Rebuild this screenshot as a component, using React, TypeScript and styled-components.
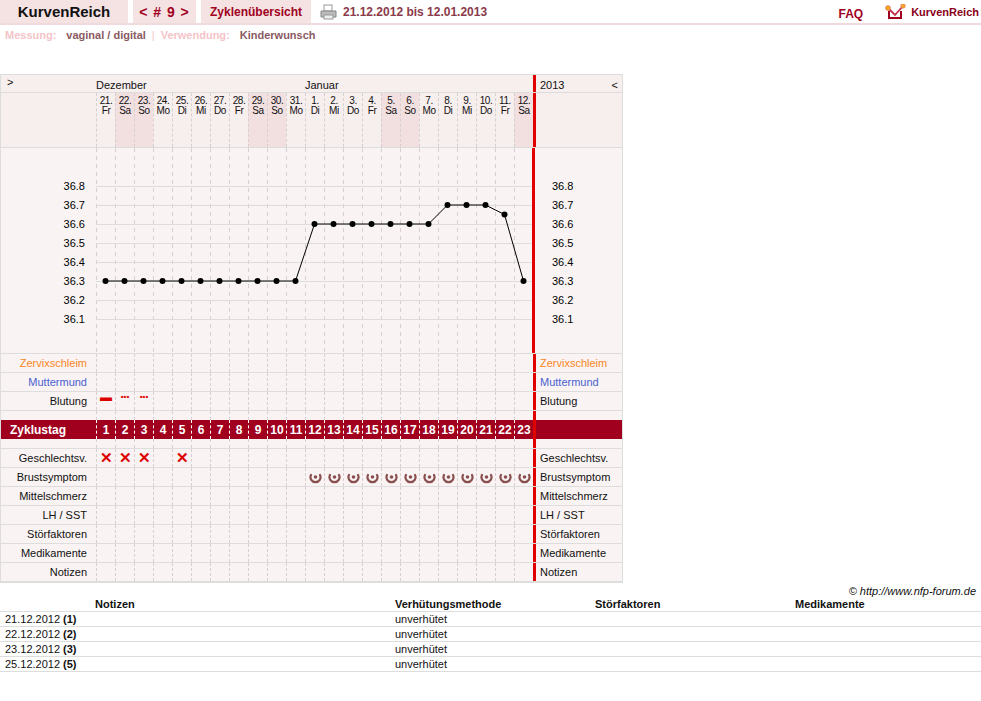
import React from "react";
import styled, { createGlobalStyle } from "styled-components";

const Global = createGlobalStyle`
  body { margin: 0; font-family: "Liberation Sans", Arial, sans-serif; font-size: 11px; color: #111; background: #fff; }
`;

const COL = 19;
const N = 23;
const days = ["21.","22.","23.","24.","25.","26.","27.","28.","29.","30.","31.","1.","2.","3.","4.","5.","6.","7.","8.","9.","10.","11.","12."];
const wds = ["Fr","Sa","So","Mo","Di","Mi","Do","Fr","Sa","So","Mo","Di","Mi","Do","Fr","Sa","So","Mo","Di","Mi","Do","Fr","Sa"];
const temps = [36.3,36.3,36.3,36.3,36.3,36.3,36.3,36.3,36.3,36.3,36.3,36.6,36.6,36.6,36.6,36.6,36.6,36.6,36.7,36.7,36.7,36.65,36.3];
const levels = [36.8,36.7,36.6,36.5,36.4,36.3,36.2,36.1];
const ty = (t: number) => 38 + (36.8 - t) * 190;

const TopBar = styled.div`
  display: flex; align-items: stretch; height: 23px; border-bottom: 2px solid #f1dadc;
`;
const Tab = styled.div<{ $w: number; $plain?: boolean }>`
  width: ${p => p.$w}px; margin-right: 5px; background: ${p => p.$plain ? "transparent" : "#f5e2e3"};
  display: flex; align-items: center; justify-content: center; font-weight: bold;
`;
const Brand = styled.span` font-size: 15px; color: #111; `;
const Nav = styled.span` font-size: 14px; color: #a0001e; letter-spacing: 1px; `;
const TabLink = styled.span` font-size: 12px; color: #a0001e; `;
const DateRange = styled.div`
  display: flex; align-items: center; gap: 6px; padding-left: 4px; font-weight: bold; font-size: 12px; color: #8b3a4a; flex: 1;
`;
const Faq = styled.div` font-weight: bold; font-size: 12px; color: #a0001e; display: flex; align-items: center; margin-right: 22px; padding-top: 4px; `;
const Logo = styled.div` display: flex; align-items: center; gap: 4px; font-weight: bold; font-size: 11px; color: #8a0018; margin-right: 2px; `;
const SubBar = styled.div` padding: 4px 5px; font-size: 11px; font-weight: bold; `;
const Muted = styled.span` color: #f4c4c8; margin-right: 10px; `;
const Val = styled.span` color: #8a5a62; `;
const Sep = styled.span` color: #f4c4c8; margin: 0 6px; font-weight: normal; `;

const Chart = styled.div` margin-top: 29px; width: 621px; border: 1px solid #ddd; background: #f9f3f3; `;
const Row = styled.div<{ $h: number; $bg?: string; $line?: boolean }>`
  display: flex; height: ${p => p.$h}px; background: ${p => p.$bg || "transparent"};
  border-bottom: ${p => p.$line === false ? "none" : "1px solid #ddd"}; box-sizing: border-box;
`;
const Label = styled.div<{ $color?: string; $align?: string; $white?: boolean }>`
  width: 95px; flex: none; box-sizing: border-box; padding: 0 9px 0 4px; display: flex; align-items: center;
  justify-content: ${p => p.$align || "flex-end"}; color: ${p => p.$color || "#111"};
  ${p => p.$white ? "color:#fff;font-weight:bold;font-size:12px;padding-left:9px;" : ""}
`;
const Cells = styled.div` display: flex; width: ${N * COL}px; flex: none; `;
const Cell = styled.div<{ $shade?: boolean; $white?: boolean; $top?: boolean }>`
  width: ${COL}px; flex: none; box-sizing: border-box; border-left: 1px dashed ${p => p.$white ? "#fff" : "#d6d0d0"};
  background: ${p => p.$shade ? "#f2dfe0" : "transparent"};
  display: flex; flex-direction: column; align-items: center; justify-content: ${p => p.$top ? "flex-start" : "center"};
  ${p => p.$white ? "color:#fff;font-weight:bold;font-size:12px;" : ""}
`;
const DayTxt = styled.div` font-size: 10px; line-height: 10px; letter-spacing: -0.4px; padding-top: 3px; text-align: center; `;
const Right = styled.div<{ $color?: string }>`
  flex: 1; border-left: 3px solid #e00000; box-sizing: border-box; padding-left: 4px; display: flex; align-items: center;
  color: ${p => p.$color || "#111"};
`;
const MonthRow = styled.div` display: flex; height: 17px; border-bottom: 1px solid #ddd; background: #f7eeee; `;
const MonthLabel = styled.div<{ $w: number }>` width: ${p => p.$w}px; flex: none; padding-top: 4px; `;
const Arrow = styled.div` width: 95px; flex: none; padding: 1px 0 0 6px; box-sizing: border-box; `;
const YearCell = styled(Right)` justify-content: space-between; padding-right: 4px; align-items: flex-start; padding-top: 4px; `;

const Blood = styled.div<{ $big?: boolean }>`
  margin-top: -8px; color: #d00; font-weight: bold; font-size: ${p => p.$big ? "12px" : "8px"}; line-height: 8px;
`;
const Cross = styled.span` color: #d00; font-size: 15px; font-weight: bold; `;

const Copy = styled.div` width: 976px; text-align: right; font-style: italic; font-size: 11px; margin-top: 2px; line-height: 12px; `;
const Table = styled.div` width: 981px; font-size: 11px; `;
const TRow = styled.div<{ $head?: boolean }>`
  display: grid; grid-template-columns: 58px 32px 300px 200px 200px 1fr; height: 15px; align-items: center;
  border-bottom: 1px solid #ddd; box-sizing: border-box; padding-left: 5px; font-weight: ${p => p.$head ? "bold" : "normal"};
`;
const B = styled.span` font-weight: bold; `;

const weekend = (i: number) => ["Sa", "So"].includes(wds[i]);
const idx = Array.from({ length: N }, (_, i) => i);

const Breast = () => (
  <svg width="13" height="13" viewBox="0 0 13 13">
    <path d="M2 4 A5 5 0 1 0 11 4" fill="none" stroke="#8a5050" strokeWidth="2.2" strokeLinecap="round" />
    <circle cx="6.5" cy="6" r="1.8" fill="#8a5050" />
  </svg>
);

const EmptyRow = ({ label, color, children }: { label: string; color?: string; children?: (i: number) => React.ReactNode }) => (
  <Row $h={19}>
    <Label $color={color}>{label}</Label>
    <Cells>{idx.map(i => <Cell key={i}>{children ? children(i) : null}</Cell>)}</Cells>
    <Right $color={color}>{label}</Right>
  </Row>
);

const Plot = () => {
  const pts = temps.map((t, i) => [i * COL + 9.5, ty(t)]);
  return (
    <svg width={N * COL} height={206} style={{ display: "block" }}>
      {idx.map(i => <line key={i} x1={i * COL + 0.5} x2={i * COL + 0.5} y1={0} y2={206} stroke="#d6d0d0" strokeDasharray="4 4" />)}
      {levels.map(l => <line key={l} x1={0} x2={N * COL} y1={ty(l) + 0.5} y2={ty(l) + 0.5} stroke="#ddd" />)}
      <polyline points={pts.map(p => p.join(",")).join(" ")} fill="none" stroke="#000" strokeWidth="1" />
      {pts.map((p, i) => <circle key={i} cx={p[0]} cy={p[1]} r={3} fill="#000" />)}
    </svg>
  );
};
const Axis = ({ anchor }: { anchor: "end" | "start" }) => (
  <svg width={anchor === "end" ? 95 : 87} height={206} style={{ display: "block" }}>
    {levels.map(l => (
      <text key={l} x={anchor === "end" ? 84 : 17} y={ty(l) + 4} textAnchor={anchor} fontSize="11" fontFamily="Liberation Sans, Arial, sans-serif">{l.toFixed(1)}</text>
    ))}
  </svg>
);
const PlotRight = styled.div` flex: 1; border-left: 3px solid #e00000; `;

export default function App() {
  return (
    <>
      <Global />
      <TopBar>
        <Tab $w={128}><Brand>KurvenReich</Brand></Tab>
        <Tab $w={63}><Nav>&lt; # 9 &gt;</Nav></Tab>
        <Tab $w={110}><TabLink>Zyklenübersicht</TabLink></Tab>
        <DateRange>
          <svg width="17" height="16" viewBox="0 0 17 16">
            <rect x="4" y="1" width="8" height="6" fill="#fff" stroke="#999" />
            <path d="M1 7 h15 v6 h-15 z" fill="#bbb" stroke="#888" />
            <rect x="4" y="11" width="9" height="4" fill="#eee" stroke="#999" />
          </svg>
          21.12.2012 bis 12.01.2013
        </DateRange>
        <Faq>FAQ</Faq>
        <Logo>
          <svg width="22" height="16" viewBox="0 0 22 16">
            <path d="M4 7 v7 h12 v-7" fill="none" stroke="#a0001e" strokeWidth="2" />
            <polyline points="3,4 10,11 18,2" fill="none" stroke="#c0304a" strokeWidth="1.8" />
            <circle cx="3" cy="4" r="2.5" fill="#f5a623" stroke="#c66" strokeWidth=".5" />
            <circle cx="18" cy="2" r="2.3" fill="#f5a623" stroke="#c66" strokeWidth=".5" />
          </svg>
          KurvenReich
        </Logo>
      </TopBar>
      <SubBar>
        <Muted>Messung:</Muted><Val>vaginal / digital</Val><Sep>|</Sep><Muted>Verwendung:</Muted><Val>Kinderwunsch</Val>
      </SubBar>
      <Chart>
        <MonthRow>
          <Arrow>&gt;</Arrow>
          <MonthLabel $w={11 * COL}>Dezember</MonthLabel>
          <MonthLabel $w={12 * COL}>Januar</MonthLabel>
          <YearCell><span>2013</span><span>&lt;</span></YearCell>
        </MonthRow>
        <Row $h={55} $bg="#f7eeee">
          <Label />
          <Cells>
            {idx.map(i => (
              <Cell key={i} $shade={weekend(i)} $top>
                <DayTxt>{days[i]}<br />{wds[i]}</DayTxt>
              </Cell>
            ))}
          </Cells>
          <Right />
        </Row>
        <Row $h={206}>
          <Axis anchor="end" />
          <Plot />
          <PlotRight><Axis anchor="start" /></PlotRight>
        </Row>
        <EmptyRow label="Zervixschleim" color="#f7861e" />
        <EmptyRow label="Muttermund" color="#4a5fd0" />
        <EmptyRow label="Blutung">
          {i => i === 0 ? <Blood $big>▬</Blood> : i < 3 ? <Blood>•••</Blood> : null}
        </EmptyRow>
        <Row $h={9} $line={false}><Label /><Cells>{idx.map(i => <Cell key={i} />)}</Cells><Right /></Row>
        <Row $h={19} $bg="#a0001e" $line={false}>
          <Label $white $align="flex-start">Zyklustag</Label>
          <Cells>{idx.map(i => <Cell key={i} $white>{i + 1}</Cell>)}</Cells>
          <Right />
        </Row>
        <Row $h={10}><Label /><Cells>{idx.map(i => <Cell key={i} />)}</Cells><Right /></Row>
        <EmptyRow label="Geschlechtsv.">{i => [0, 1, 2, 4].includes(i) ? <Cross>✕</Cross> : null}</EmptyRow>
        <EmptyRow label="Brustsymptom">{i => i >= 11 ? <Breast /> : null}</EmptyRow>
        <EmptyRow label="Mittelschmerz" />
        <EmptyRow label="LH / SST" />
        <EmptyRow label="Störfaktoren" />
        <EmptyRow label="Medikamente" />
        <EmptyRow label="Notizen" />
      </Chart>
      <Copy>© http://www.nfp-forum.de</Copy>
      <Table>
        <TRow $head><span /><span /><span>Notizen</span><span>Verhütungsmethode</span><span>Störfaktoren</span><span>Medikamente</span></TRow>
        {[["21.12.2012", "(1)"], ["22.12.2012", "(2)"], ["23.12.2012", "(3)"], ["25.12.2012", "(5)"]].map(([d, n]) => (
          <TRow key={d}><span>{d}</span><B>{n}</B><span /><span>unverhütet</span><span /><span /></TRow>
        ))}
      </Table>
    </>
  );
}
